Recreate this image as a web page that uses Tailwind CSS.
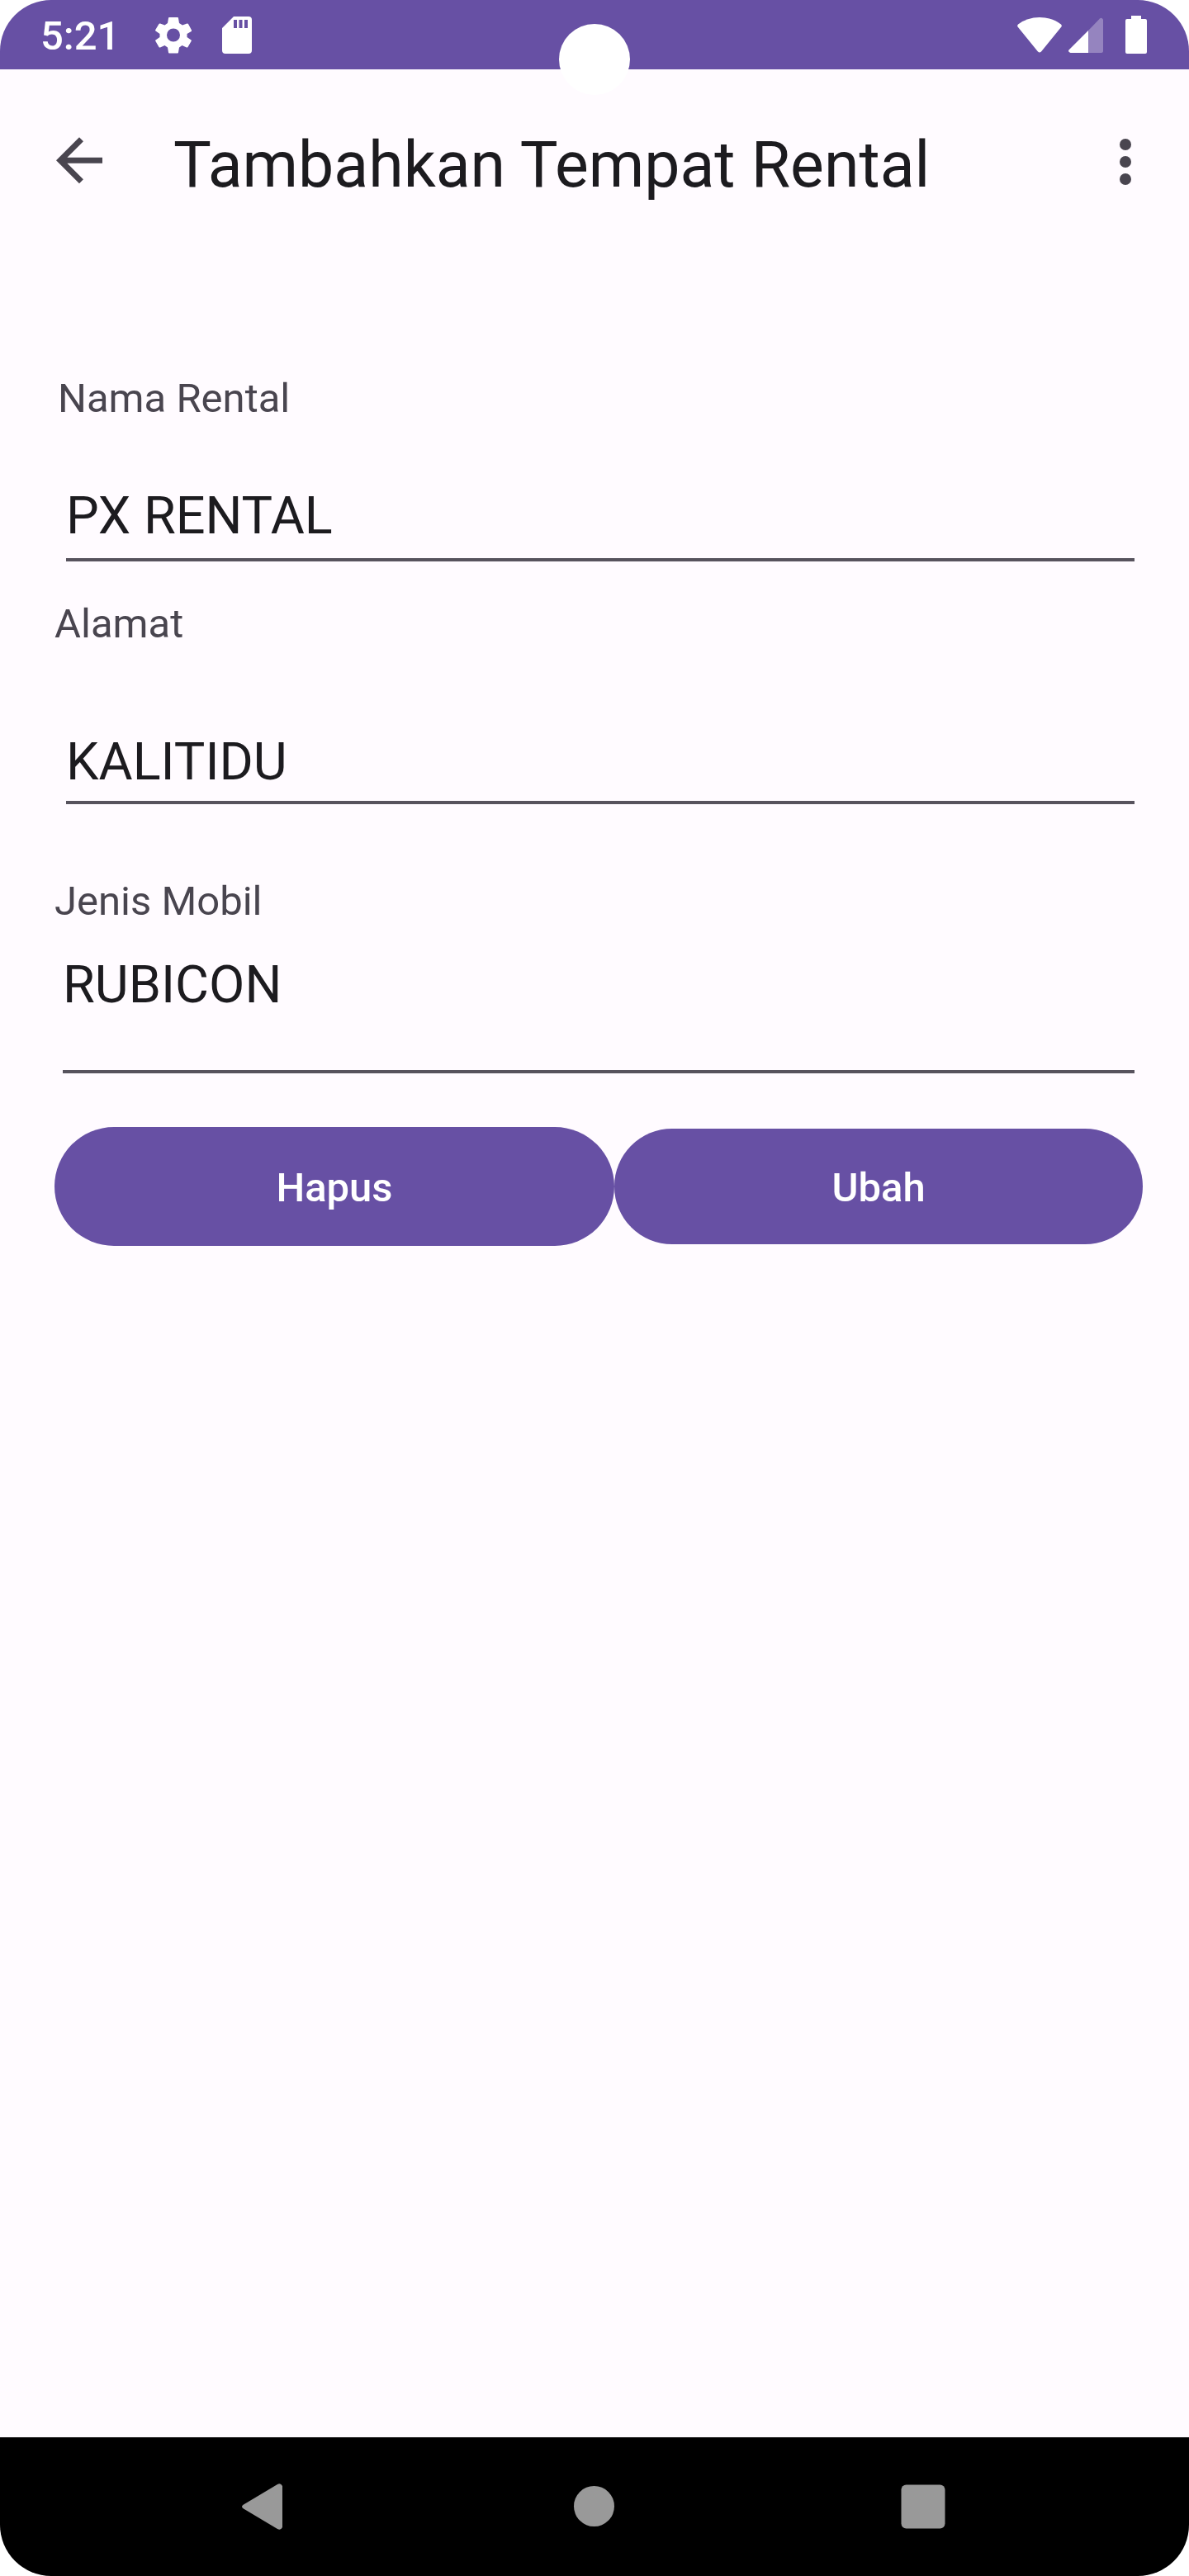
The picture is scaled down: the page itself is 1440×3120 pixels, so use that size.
<!DOCTYPE html>
<html lang="id">
<head>
<meta charset="utf-8">
<meta name="viewport" content="width=device-width, initial-scale=1">
<title>Tambahkan Tempat Rental</title>
<script src="https://cdn.jsdelivr.net/npm/@tailwindcss/browser@4"></script>
</head>
<body class="bg-white font-[Roboto,sans-serif] text-[#1c1b1f]">
<div class="relative flex min-h-screen flex-col overflow-hidden rounded-[62px] bg-[#fffbff]">

  <!-- Status bar -->
  <div class="flex h-[84px] items-center justify-between bg-[#6750a4] pr-[51px] pl-[49px] text-white">
    <div class="flex items-center">
      <span class="pt-1 text-[49px] leading-[64px] font-medium">5:21</span>
      <svg class="ml-[43px] h-[45px] w-[44px]" viewBox="0 0 44 45" fill="currentColor" aria-hidden="true">
        <path fill-rule="evenodd" d="M17 1h10q1 0 1 1l1 6 4 2.500 5.500-2q1-.3 1.500.5l4 7.500q.4.9-.3 1.500L38.500 21v4l5 3.500q.6.600.2 1.300L39.500 37q-.5.800-1.500.500L32.500 35 29 37.500l-1 6q0 1-1 1H17q-1 0-1-1l-1-6-3.500-2.500L6 37.500q-1 .3-1.500-.5L.3 29.800q-.4-.8.200-1.300l5-3.500v-4l-5-3.500Q-.2 17 .3 16L4.500 9q.5-.8 1.500-.5l5.500 2L15 8l1-6q0-1 1-1ZM22 14.500a8 8 0 1 0 0 16a8 8 0 0 0 0-16Z"/>
      </svg>
      <svg class="ml-[37px] h-[45px] w-[36px]" viewBox="0 0 36 45" fill="currentColor" aria-hidden="true">
        <path fill-rule="evenodd" d="M14 0h18q4 0 4 4v37q0 4-4 4H4q-4 0-4-4V14ZM14 4v10h4V4ZM20.500 4v10h4V4ZM27 4v10h4V4Z"/>
      </svg>
    </div>
    <div class="flex items-center">
      <svg class="h-[44px] w-[54px]" viewBox="0 0 54 44" fill="currentColor" aria-hidden="true">
        <path d="M1 9.500Q12 1 27 1T53 9.500Q54.500 11 53 13L29 42.500Q27 44.300 25 42.500L1 13Q-.5 11 1 9.500Z"/>
      </svg>
      <svg class="ml-[8px] h-[43px] w-[42px]" viewBox="0 0 42 43" fill="currentColor" aria-hidden="true">
        <path opacity=".3" d="M24 16 38 1.500Q40-.5 42 2.500V40.500Q42 43 39.500 43H24Z"/>
        <path d="M24 16V43H2.500Q-1 42 .5 39.500Z"/>
      </svg>
      <svg class="ml-[27px] h-[46px] w-[26px]" viewBox="0 0 26 46" fill="currentColor" aria-hidden="true">
        <path d="M7 0H19V4H24Q26 4 26 6V44Q26 46 24 46H2Q0 46 0 44V6Q0 4 2 4H7Z"/>
      </svg>
    </div>
  </div>

  <!-- Camera cutout -->
  <div class="absolute top-[29px] left-1/2 size-[86px] -translate-x-1/2 rounded-full bg-white"></div>

  <!-- App bar -->
  <header class="flex h-[224px] items-center pr-[35px] pl-[54px] text-[#49454f]">
    <button type="button" aria-label="Kembali">
      <svg class="size-[84px]" viewBox="0 .5 24 24" fill="currentColor" aria-hidden="true"><path d="M20 11H7.830l5.590-5.590L12 4l-8 8 8 8 1.410-1.410L7.830 13H20v-2z"/></svg>
    </button>
    <h1 class="ml-[72px] flex-1 pt-2 text-[77px] leading-[96px] text-[#1c1b1f]">Tambahkan Tempat Rental</h1>
    <button type="button" aria-label="Opsi lainnya">
      <svg class="size-[84px]" viewBox="0 0 24 24" fill="currentColor" aria-hidden="true"><circle cx="12" cy="6" r="2"/><circle cx="12" cy="12" r="2"/><circle cx="12" cy="18" r="2"/></svg>
    </button>
  </header>

  <!-- Form -->
  <form class="flex flex-1 flex-col pt-[143px] pr-[56px] pl-[66px]">
    <label for="nama" class="pl-1 text-[49px] leading-[64px] text-[#49454f]">Nama Rental</label>
    <input id="nama" type="text" value="PX RENTAL" class="mt-[61px] mr-[10px] ml-[14px] h-[104px] border-b-4 border-[#57535d] pb-[3px] text-[63px] outline-none">

    <label for="alamat" class="mt-[44px] text-[49px] leading-[64px] text-[#49454f]">Alamat</label>
    <input id="alamat" type="text" value="KALITIDU" class="mt-[90px] mr-[10px] ml-[14px] h-[96px] border-b-4 border-[#57535d] pb-[3px] text-[63px] outline-none">

    <label for="jenis" class="mt-[86px] text-[49px] leading-[64px] text-[#49454f]">Jenis Mobil</label>
    <input id="jenis" type="text" value="RUBICON" class="mt-[32px] mr-[10px] ml-[10px] h-[144px] border-b-4 border-[#57535d] pb-[67px] text-[63px] outline-none">

    <div class="mt-[65px] flex items-center text-[49px] font-medium text-white">
      <button type="button" class="h-[144px] flex-[678] rounded-full bg-[#6750a4] pt-1">Hapus</button>
      <button type="submit" class="h-[140px] flex-[640] rounded-full bg-[#6750a4] pt-1">Ubah</button>
    </div>
  </form>

  <!-- System navigation -->
  <nav class="grid h-[168px] grid-cols-3 place-items-center bg-black px-[120px] text-[#999]">
    <button type="button" aria-label="Kembali">
      <svg class="size-[84px]" viewBox="0 0 84 84" fill="currentColor" aria-hidden="true"><path d="M17 39.500 58 15Q62 13 64 17V67Q62 71 58 69L17 44.500Q13 42 17 39.500Z"/></svg>
    </button>
    <button type="button" aria-label="Beranda">
      <svg class="size-[84px]" viewBox="0 0 84 84" fill="currentColor" aria-hidden="true"><circle cx="41.500" cy="41.500" r="24.500"/></svg>
    </button>
    <button type="button" aria-label="Aplikasi terbaru">
      <svg class="size-[84px]" viewBox="0 0 84 84" fill="currentColor" aria-hidden="true"><rect x="13.500" y="15.500" width="53" height="53" rx="6"/></svg>
    </button>
  </nav>
</div>
</body>
</html>
